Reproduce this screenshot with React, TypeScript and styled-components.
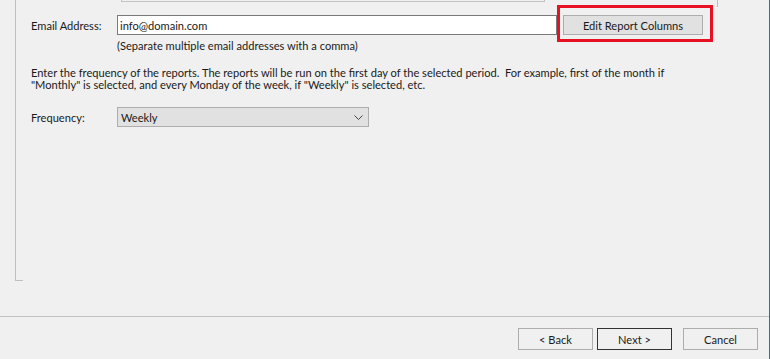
import styled, { createGlobalStyle } from 'styled-components';

const GlobalStyle = createGlobalStyle`
  html, body {
    margin: 0;
    padding: 0;
    background: #f0f0f0;
  }
  body {
    font-family: Lato, "Open Sans", Arial, sans-serif;
    font-size: 11.1px;
    color: #1a1a1a;
  }
`;

const Window = styled.div`
  width: 769px;
  height: 359px;
  border-right: 1px solid #1c6fc9;
  display: flex;
  flex-direction: column;
  overflow: hidden;
`;

const Body = styled.div`
  height: 316px;
  padding-left: 15px;
  box-sizing: border-box;
`;

const Group = styled.div`
  position: relative;
  height: 281px;
  border-left: 1px solid #bfbfbf;
  padding-left: 15px;
  box-sizing: border-box;

  &::after {
    content: '';
    position: absolute;
    left: 0;
    bottom: 0;
    width: 7px;
    border-bottom: 1px solid #bfbfbf;
  }
`;

const TopStrip = styled.div`
  display: flex;
  height: 7px;
`;

const CutBox = styled.div`
  margin-left: 90px;
  width: 422px;
  height: 1px;
  border: 1px solid #c4c4c4;
  border-top: none;
`;

const SideTick = styled.div`
  margin-left: 172px;
  width: 1px;
  height: 7px;
  background: #bfbfbf;
`;

const Row = styled.div<{ $top: number }>`
  display: flex;
  align-items: center;
  margin-top: ${({ $top }) => $top}px;
`;

const Label = styled.div`
  width: 86px;
  flex-shrink: 0;
`;

const TextInput = styled.div`
  width: 440px;
  height: 20px;
  box-sizing: border-box;
  border: 1px solid #7a7a7a;
  background: #fff;
  padding-left: 2px;
  display: flex;
  align-items: center;
`;

const ButtonWrap = styled.div`
  position: relative;
  margin-left: 6px;
`;

const Highlight = styled.div`
  position: absolute;
  top: -10px;
  left: -6px;
  width: 156px;
  height: 37px;
  box-sizing: border-box;
  border: 3px solid #e81123;
  pointer-events: none;
`;

const Button = styled.div<{ $w: number; $default?: boolean; $filled?: boolean }>`
  width: ${({ $w }) => $w}px;
  height: 20px;
  box-sizing: border-box;
  border: 1px solid ${({ $default }) => ($default ? '#333' : '#adadad')};
  background: ${({ $filled }) => ($filled ? '#e1e1e1' : '#f0f0f0')};
  display: flex;
  align-items: center;
  justify-content: center;
`;

const Hint = styled.div`
  margin-left: 86px;
  margin-top: 4px;
  line-height: 13px;
`;

const Paragraph = styled.div`
  margin-top: 15px;
  line-height: 12px;
  white-space: nowrap;
`;

const Select = styled.div`
  width: 252px;
  height: 20px;
  box-sizing: border-box;
  border: 1px solid #adadad;
  background: #e1e1e1;
  display: flex;
  align-items: center;
  justify-content: space-between;
  padding: 0 5px 0 3px;
`;

const Separator = styled.div`
  height: 1px;
  background: #c2c2c2;
`;

const Footer = styled.div`
  display: flex;
  justify-content: flex-end;
  gap: 4px;
  padding: 11px 11px 0 0;
`;

const FooterButton = styled(Button)`
  height: 22px;
`;

const CancelGap = styled.div`
  width: 3px;
`;

const Chevron = () => (
  <svg width="9" height="5" viewBox="0 0 9 5">
    <polyline points="0.5,0.5 4.5,4.5 8.5,0.5" fill="none" stroke="#444" strokeWidth="1" />
  </svg>
);

const App = () => (
  <>
    <GlobalStyle />
    <Window>
      <Body>
        <Group>
          <TopStrip>
            <CutBox />
            <SideTick />
          </TopStrip>
          <Row $top={8}>
            <Label>Email Address:</Label>
            <TextInput>info@domain.com</TextInput>
            <ButtonWrap>
              <Button $w={140} $filled>Edit Report Columns</Button>
              <Highlight />
            </ButtonWrap>
          </Row>
          <Hint>(Separate multiple email addresses with a comma)</Hint>
          <Paragraph>
            Enter the frequency of the reports. The reports will be run on the first day of the selected period.&nbsp; For example, first of the month if
            <br />
            "Monthly" is selected, and every Monday of the week, if "Weekly" is selected, etc.
          </Paragraph>
          <Row $top={16}>
            <Label>Frequency:</Label>
            <Select>
              <span>Weekly</span>
              <Chevron />
            </Select>
          </Row>
        </Group>
      </Body>
      <Separator />
      <Footer>
        <FooterButton $w={75}>&lt; Back</FooterButton>
        <FooterButton $w={75} $default>Next &gt;</FooterButton>
        <CancelGap />
        <FooterButton $w={75}>Cancel</FooterButton>
      </Footer>
    </Window>
  </>
);

export default App;
